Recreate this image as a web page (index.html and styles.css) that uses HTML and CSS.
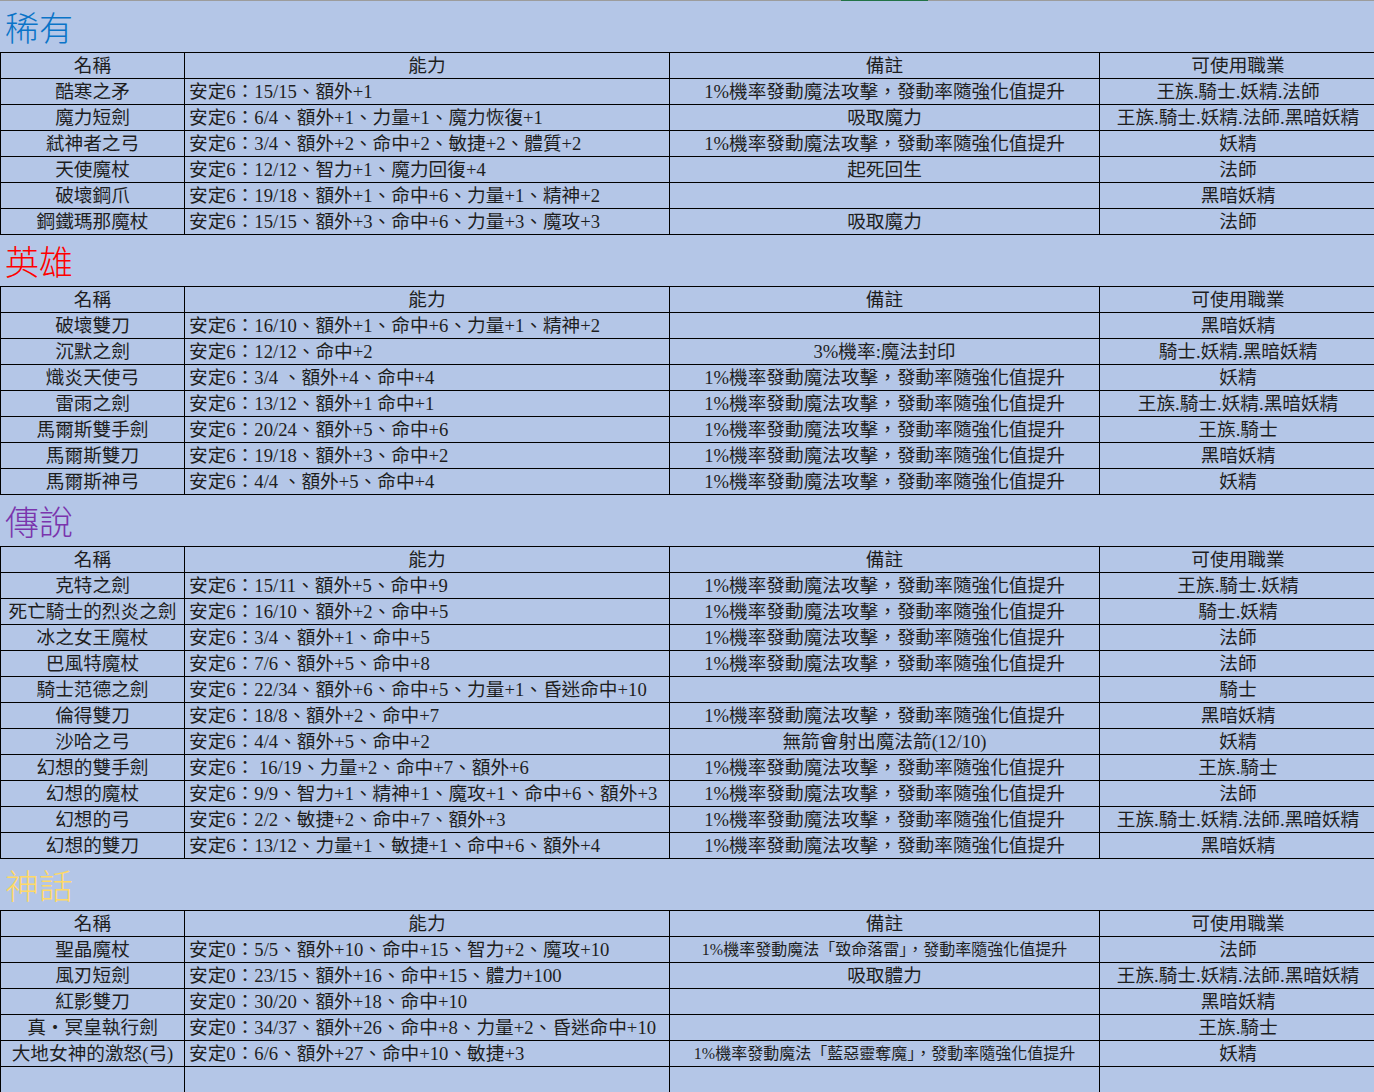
FILE: index.html
```html
<!DOCTYPE html>
<html lang="zh-Hant">
<head>
<meta charset="utf-8">
<title>武器</title>
<link rel="stylesheet" href="styles.css">
</head>
<body>
<div class="topline"><div class="topline-tab"></div></div>

<div class="title title-rare">稀有</div>
<div class="sheet">
  <div class="c c1">名稱</div><div class="c c2 hd">能力</div><div class="c c3">備註</div><div class="c c4">可使用職業</div>
  <div class="c c1">酷寒之矛</div><div class="c c2">安定6：15/15、額外+1</div><div class="c c3">1%機率發動魔法攻擊，發動率隨強化值提升</div><div class="c c4">王族.騎士.妖精.法師</div>
  <div class="c c1">魔力短劍</div><div class="c c2">安定6：6/4、額外+1、力量+1、魔力恢復+1</div><div class="c c3">吸取魔力</div><div class="c c4">王族.騎士.妖精.法師.黑暗妖精</div>
  <div class="c c1">弒神者之弓</div><div class="c c2">安定6：3/4、額外+2、命中+2、敏捷+2、體質+2</div><div class="c c3">1%機率發動魔法攻擊，發動率隨強化值提升</div><div class="c c4">妖精</div>
  <div class="c c1">天使魔杖</div><div class="c c2">安定6：12/12、智力+1、魔力回復+4</div><div class="c c3">起死回生</div><div class="c c4">法師</div>
  <div class="c c1">破壞鋼爪</div><div class="c c2">安定6：19/18、額外+1、命中+6、力量+1、精神+2</div><div class="c c3"></div><div class="c c4">黑暗妖精</div>
  <div class="c c1">鋼鐵瑪那魔杖</div><div class="c c2">安定6：15/15、額外+3、命中+6、力量+3、魔攻+3</div><div class="c c3">吸取魔力</div><div class="c c4">法師</div>
</div>

<div class="title title-hero">英雄</div>
<div class="sheet">
  <div class="c c1">名稱</div><div class="c c2 hd">能力</div><div class="c c3">備註</div><div class="c c4">可使用職業</div>
  <div class="c c1">破壞雙刀</div><div class="c c2">安定6：16/10、額外+1、命中+6、力量+1、精神+2</div><div class="c c3"></div><div class="c c4">黑暗妖精</div>
  <div class="c c1">沉默之劍</div><div class="c c2">安定6：12/12、命中+2</div><div class="c c3">3%機率:魔法封印</div><div class="c c4">騎士.妖精.黑暗妖精</div>
  <div class="c c1">熾炎天使弓</div><div class="c c2">安定6：3/4 、額外+4、命中+4</div><div class="c c3">1%機率發動魔法攻擊，發動率隨強化值提升</div><div class="c c4">妖精</div>
  <div class="c c1">雷雨之劍</div><div class="c c2">安定6：13/12、額外+1 命中+1</div><div class="c c3">1%機率發動魔法攻擊，發動率隨強化值提升</div><div class="c c4">王族.騎士.妖精.黑暗妖精</div>
  <div class="c c1">馬爾斯雙手劍</div><div class="c c2">安定6：20/24、額外+5、命中+6</div><div class="c c3">1%機率發動魔法攻擊，發動率隨強化值提升</div><div class="c c4">王族.騎士</div>
  <div class="c c1">馬爾斯雙刀</div><div class="c c2">安定6：19/18、額外+3、命中+2</div><div class="c c3">1%機率發動魔法攻擊，發動率隨強化值提升</div><div class="c c4">黑暗妖精</div>
  <div class="c c1">馬爾斯神弓</div><div class="c c2">安定6：4/4 、額外+5、命中+4</div><div class="c c3">1%機率發動魔法攻擊，發動率隨強化值提升</div><div class="c c4">妖精</div>
</div>

<div class="title title-legend">傳說</div>
<div class="sheet">
  <div class="c c1">名稱</div><div class="c c2 hd">能力</div><div class="c c3">備註</div><div class="c c4">可使用職業</div>
  <div class="c c1">克特之劍</div><div class="c c2">安定6：15/11、額外+5、命中+9</div><div class="c c3">1%機率發動魔法攻擊，發動率隨強化值提升</div><div class="c c4">王族.騎士.妖精</div>
  <div class="c c1">死亡騎士的烈炎之劍</div><div class="c c2">安定6：16/10、額外+2、命中+5</div><div class="c c3">1%機率發動魔法攻擊，發動率隨強化值提升</div><div class="c c4">騎士.妖精</div>
  <div class="c c1">冰之女王魔杖</div><div class="c c2">安定6：3/4、額外+1、命中+5</div><div class="c c3">1%機率發動魔法攻擊，發動率隨強化值提升</div><div class="c c4">法師</div>
  <div class="c c1">巴風特魔杖</div><div class="c c2">安定6：7/6、額外+5、命中+8</div><div class="c c3">1%機率發動魔法攻擊，發動率隨強化值提升</div><div class="c c4">法師</div>
  <div class="c c1">騎士范德之劍</div><div class="c c2">安定6：22/34、額外+6、命中+5、力量+1、昏迷命中+10</div><div class="c c3"></div><div class="c c4">騎士</div>
  <div class="c c1">倫得雙刀</div><div class="c c2">安定6：18/8、額外+2、命中+7</div><div class="c c3">1%機率發動魔法攻擊，發動率隨強化值提升</div><div class="c c4">黑暗妖精</div>
  <div class="c c1">沙哈之弓</div><div class="c c2">安定6：4/4、額外+5、命中+2</div><div class="c c3">無箭會射出魔法箭(12/10)</div><div class="c c4">妖精</div>
  <div class="c c1">幻想的雙手劍</div><div class="c c2">安定6：&nbsp;16/19、力量+2、命中+7、額外+6</div><div class="c c3">1%機率發動魔法攻擊，發動率隨強化值提升</div><div class="c c4">王族.騎士</div>
  <div class="c c1">幻想的魔杖</div><div class="c c2">安定6：9/9、智力+1、精神+1、魔攻+1、命中+6、額外+3</div><div class="c c3">1%機率發動魔法攻擊，發動率隨強化值提升</div><div class="c c4">法師</div>
  <div class="c c1">幻想的弓</div><div class="c c2">安定6：2/2、敏捷+2、命中+7、額外+3</div><div class="c c3">1%機率發動魔法攻擊，發動率隨強化值提升</div><div class="c c4">王族.騎士.妖精.法師.黑暗妖精</div>
  <div class="c c1">幻想的雙刀</div><div class="c c2">安定6：13/12、力量+1、敏捷+1、命中+6、額外+4</div><div class="c c3">1%機率發動魔法攻擊，發動率隨強化值提升</div><div class="c c4">黑暗妖精</div>
</div>

<div class="title title-myth">神話</div>
<div class="sheet">
  <div class="c c1">名稱</div><div class="c c2 hd">能力</div><div class="c c3">備註</div><div class="c c4">可使用職業</div>
  <div class="c c1">聖晶魔杖</div><div class="c c2">安定0：5/5、額外+10、命中+15、智力+2、魔攻+10</div><div class="c c3 small">1%機率發動魔法「致命落雷」，發動率隨強化值提升</div><div class="c c4">法師</div>
  <div class="c c1">風刃短劍</div><div class="c c2">安定0：23/15、額外+16、命中+15、體力+100</div><div class="c c3">吸取體力</div><div class="c c4">王族.騎士.妖精.法師.黑暗妖精</div>
  <div class="c c1">紅影雙刀</div><div class="c c2">安定0：30/20、額外+18、命中+10</div><div class="c c3"></div><div class="c c4">黑暗妖精</div>
  <div class="c c1">真・冥皇執行劍</div><div class="c c2">安定0：34/37、額外+26、命中+8、力量+2、昏迷命中+10</div><div class="c c3"></div><div class="c c4">王族.騎士</div>
  <div class="c c1">大地女神的激怒(弓)</div><div class="c c2">安定0：6/6、額外+27、命中+10、敏捷+3</div><div class="c c3 small">1%機率發動魔法「藍惡靈奪魔」，發動率隨強化值提升</div><div class="c c4">妖精</div>
  <div class="c c1 tall"></div><div class="c c2 tall"></div><div class="c c3 tall"></div><div class="c c4 tall"></div>
</div>
</body>
</html>
```

FILE: styles.css
```css
html {
  overflow: hidden;
  background: #b4c6e7;
}

body {
  margin: 0;
  background: #b4c6e7;
  color: #1e1e1e;
  font-family: "Liberation Serif", "Noto Sans CJK TC", serif;
  font-size: 18.67px;
  width: 1380px;
}

.topline {
  height: 1px;
  background: #9c9c9c;
}

.topline-tab {
  margin-left: 841px;
  width: 87px;
  height: 1px;
  background: #217346;
}

.title {
  height: 51px;
  line-height: 52px;
  padding-left: 5px;
  font-family: "Noto Sans CJK TC", sans-serif;
  font-size: 34px;
  font-weight: 300;
}

.title-rare { color: #0a74c8; }
.title-hero { color: #ff0000; }
.title-legend { color: #7a35ad; }
.title-myth { color: #ffd966; }

.sheet {
  display: grid;
  grid-template-columns: 184px 485px 430px 277px;
  border-top: 1px solid #000;
  border-left: 1px solid #000;
}

.c {
  box-sizing: border-box;
  height: 26px;
  padding-top: 1px;
  line-height: 24px;
  border-right: 1px solid #000;
  border-bottom: 1px solid #000;
  white-space: nowrap;
  overflow: hidden;
  text-align: center;
}

.c2 {
  text-align: left;
  padding-left: 4px;
}

.c2.hd {
  text-align: center;
  padding-left: 0;
}

.small {
  font-size: 16px;
}

.tall {
  height: 60px;
}
```
